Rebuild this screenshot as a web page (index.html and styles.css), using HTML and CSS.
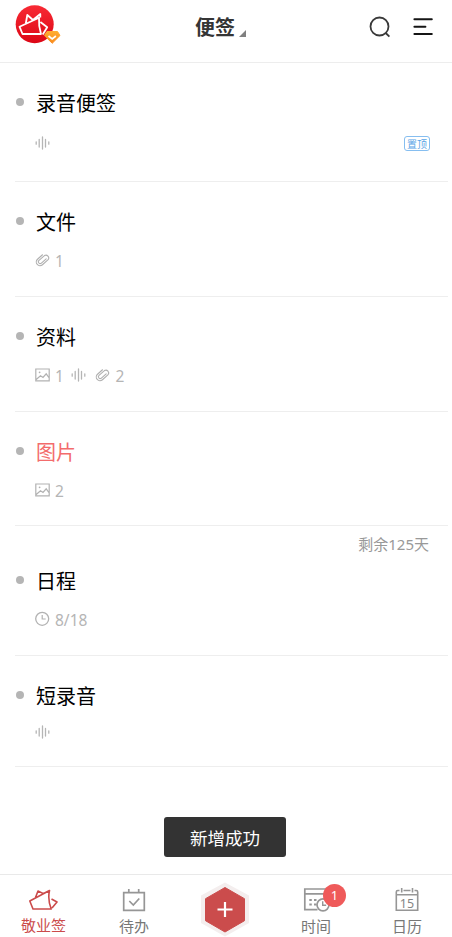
FILE: index.html
```html
<!DOCTYPE html>
<html lang="zh-CN">
<head>
<meta charset="utf-8">
<title>便签</title>
<link rel="stylesheet" href="styles.css">
</head>
<body>
<svg class="defs" width="0" height="0">
  <symbol id="wave" viewBox="0 0 16 16"><path d="M1.200 6.800v2.400M4.200 4.500v7.500M7.500 2v12M10.500 4.500v7.500M13.800 6.800v2.400" fill="none" stroke="#b5b5b5" stroke-width="1.300" stroke-linecap="round"/></symbol>
  <symbol id="clip" viewBox="0 0 16 16"><g transform="rotate(48 7.500 8)" fill="none" stroke="#b0b0b0" stroke-width="1.100" stroke-linecap="round"><path d="M3.600 4.500v6.700a3.700 3.700 0 0 0 7.400 0V3.600a2.800 2.800 0 0 0-5.500 0v7.300a1.800 1.800 0 0 0 3.600 0V4.500"/></g></symbol>
  <symbol id="pic" viewBox="0 0 16 16"><path d="M.8 2h13.400v11.800H.8zM1.200 12.500l4.300-3.700 2.500 1.600 3.200-3.600 3 4.200" fill="none" stroke="#b2b2b2" stroke-width="1.200"/><circle cx="4.600" cy="5.300" r=".9" fill="#b2b2b2"/></symbol>
  <symbol id="clock" viewBox="0 0 16 16"><circle cx="7.200" cy="7.800" r="6.500" fill="none" stroke="#b2b2b2" stroke-width="1.300"/><path d="M7.200 4v4h3.500" fill="none" stroke="#b2b2b2" stroke-width="1.200"/></symbol>
</svg>
<div class="app">
  <header class="header">
    <div class="avatar">
      <svg width="48" height="46" viewBox="0 0 48 46">
        <defs>
          <linearGradient id="red" x1="0" y1="0" x2="0" y2="1"><stop offset="0" stop-color="#f82a34"/><stop offset="1" stop-color="#dc0716"/></linearGradient>
          <linearGradient id="gold" x1="0" y1="0" x2="0" y2="1"><stop offset="0" stop-color="#ffad32"/><stop offset="1" stop-color="#f98a1c"/></linearGradient>
        </defs>
        <circle cx="19.700" cy="20.300" r="19" fill="url(#red)"/>
        <path d="M4.500 22.700 24 13.700q-.5 8 2 16.300H7.500zM10.800 19.500l1.500-8.500 5.700 5M18.500 15.500 25.300 10v3.500M25.400 18l6.800 5.200-4.500 7.300" fill="none" stroke="#fff" stroke-width="1.800" stroke-linejoin="round"/>
        <path d="M32 27.500h10.500l2.500 4-7.800 7.800-7.800-7.800z" fill="url(#gold)" stroke="url(#gold)" stroke-linejoin="round"/>
        <path d="m33.500 32 3.700 3 3.700-3" fill="none" stroke="#fff" stroke-width="1.700"/>
      </svg>
    </div>
    <h1 class="heading">便签<i class="corner"></i></h1>
    <div class="actions">
      <svg width="24" height="24" viewBox="0 0 24 24" fill="none" stroke="#393939" stroke-width="1.800"><circle cx="11.500" cy="11.500" r="9"/><path d="m17.700 18 3.700 3.700"/></svg>
      <svg width="20" height="20" viewBox="0 0 20 20" stroke="#151515" stroke-width="2" stroke-linecap="round"><path d="M1.400 2.300h17.400M1.400 9.800h11M1.400 17h17.400"/></svg>
    </div>
  </header>
  <ul class="notes">
    <li class="note first">
      <h2 class="title">录音便签</h2>
      <div class="meta"><svg class="icon"><use href="#wave"/></svg><span class="pin">置顶</span></div>
    </li>
    <li class="note">
      <h2 class="title">文件</h2>
      <div class="meta"><svg class="icon"><use href="#clip"/></svg><span class="num">1</span></div>
    </li>
    <li class="note">
      <h2 class="title">资料</h2>
      <div class="meta"><svg class="icon"><use href="#pic"/></svg><span class="num">1</span><svg class="icon"><use href="#wave"/></svg><svg class="icon after-wave"><use href="#clip"/></svg><span class="num">2</span></div>
    </li>
    <li class="note short">
      <h2 class="title red">图片</h2>
      <div class="meta"><svg class="icon"><use href="#pic"/></svg><span class="num">2</span></div>
    </li>
    <li class="note dated">
      <div class="remain">剩余125天</div>
      <h2 class="title">日程</h2>
      <div class="meta"><svg class="icon"><use href="#clock"/></svg><span class="num">8/18</span></div>
    </li>
    <li class="note last">
      <h2 class="title">短录音</h2>
      <div class="meta"><svg class="icon"><use href="#wave"/></svg></div>
    </li>
  </ul>
  <div class="toast">新增成功</div>
  <nav class="tabs">
    <a class="tab active">
      <svg width="30" height="26" viewBox="0 0 30 26" fill="none" stroke="#cb4b4b" stroke-width="1.600" stroke-linejoin="round"><path d="M.8 14 20.500 3.500q-2 9 1.700 18.500H4zM6.500 10.500 9 4l5.500 2.600M13 7.200 20.500 3.500M22.500 12l5.500 3-5 6"/></svg>
      <span>敬业签</span>
    </a>
    <a class="tab">
      <svg width="26" height="26" viewBox="0 0 26 26" fill="none" stroke="#969696" stroke-width="1.700"><path d="M2.700 5.700h20.600v17.600H2.700zM7.800 2v3.500M17.700 2v3.500M8.300 14l4 4 6-6.500"/></svg>
      <span>待办</span>
    </a>
    <a class="add">
      <svg width="50" height="56" viewBox="0 0 50 56"><path d="M25 1.500 49 14.500v27.500L25 55.500 1 42v-27.500z" fill="#f4eeee"/><path d="M25 6.500 44.500 17.700v22L25 51 5.500 39.700v-22z" fill="#cb4c4c" stroke="#cb4c4c" stroke-linejoin="round"/><path d="M17.500 28.500h15M25 21v15" stroke="#fff" stroke-width="2.200"/></svg>
    </a>
    <a class="tab">
      <svg width="28" height="26" viewBox="0 0 28 26" fill="none" stroke="#969696" stroke-width="1.700"><path d="M15.500 22.700H2.800V2h22.500v9.500M3 6.800h22"/><path d="M7.300 13h2.500M12 13h2.500M7.300 17.500h2.500M12 17.500h2.500" stroke-width="2.200"/><circle cx="21" cy="17.800" r="6" fill="#fff"/><path d="M20.700 14.300v4h3.500" stroke-width="1.400"/></svg>
      <span>时间</span>
      <b class="badge">1</b>
    </a>
    <a class="tab">
      <svg width="26" height="26" viewBox="0 0 26 26" fill="none" stroke="#969696" stroke-width="1.600"><path d="M5.500 3.500H3.800q-1.500 0-1.500 1.500v18.300h21.400V5q0-1.500-1.500-1.500h-1.700M2.500 7.800h21M9.500 3.500h7M7.700 1v4.500M18.500 1v4.500"/><text x="13" y="20.500" text-anchor="middle" class="day">15</text></svg>
      <span>日历</span>
    </a>
  </nav>
</div>
</body>
</html>
```
FILE: styles.css
```css
* { box-sizing: border-box; }
body { margin: 0; background: #fff; font-family: "Noto Sans CJK SC", sans-serif; }
.defs { display: none; }
.app { height: 937px; display: flex; flex-direction: column; overflow: hidden; }
.header { flex: none; height: 63px; border-bottom: 1px solid #ededed; display: grid; grid-template-columns: 1fr auto 1fr; padding: 4px 19px 0 15px; }
.avatar svg { display: block; }
.heading { align-self: start; margin: 9px 7px 0 0; font-size: 20px; line-height: 28px; font-weight: 700; color: #353535; display: flex; align-items: flex-end; gap: 4px; }
.corner { width: 7px; height: 7px; margin-bottom: 4px; background: #808080; clip-path: polygon(100% 0, 100% 100%, 0 100%); }
.actions { display: flex; justify-content: flex-end; gap: 21px; padding-top: 11px; }
.actions svg + svg { margin-top: 2px; }
.notes { list-style: none; margin: 0; padding: 0 4px 0 15px; }
.note { height: 115px; padding-top: 26px; border-bottom: 1px solid #eee; }
.first { height: 119px; }
.short { height: 114px; }
.dated { height: 130px; padding-top: 6px; }
.last { height: 111px; }
.title { margin: 0 0 14px; height: 28px; line-height: 28px; font-size: 20px; font-weight: 400; color: #000; display: flex; align-items: center; }
.title::before { content: ""; width: 8px; height: 8px; border-radius: 50%; background: #b5b5b5; margin: -2px 12.500px 0 .5px; }
.red { color: #f36c6c; }
.first .title { margin-bottom: 16px; }
.last .title { margin-bottom: 12px; }
.meta { display: flex; align-items: center; height: 20px; padding-left: 20px; color: #b5b5b5; font-size: 15.500px; line-height: 20px; }
.icon { width: 16px; height: 16px; flex: none; }
.num { font-family: "Noto Sans", sans-serif; margin: 1px 7.500px 0 4px; }
.after-wave { margin-left: 8px; }
.pin { margin: 0 18px 0 auto; width: 26px; height: 15px; border: 1px solid #86bef0; border-radius: 3px; font-size: 10px; line-height: 13px; text-align: center; color: #5aa5e6; }
.remain { height: 24px; margin: 0 19px 11px 0; text-align: right; font-family: "Noto Sans", "Noto Sans CJK SC", sans-serif; font-size: 15px; line-height: 24px; color: #999; }
.toast { align-self: center; width: 122px; height: 40px; margin: 50px 2px 0 0; border-radius: 3px; background: #333; color: #fff; font-size: 17.500px; line-height: 41px; text-align: center; }
.tabs { margin-top: auto; height: 63px; border-top: 1px solid #e9e9e9; display: grid; grid-template-columns: 87px 94px 88px 94px 88px; }
.tab { position: relative; display: flex; flex-direction: column; align-items: center; padding-top: 12px; font-size: 15px; line-height: 22px; color: #777; }
.tab span { margin-top: 2px; }
.active { color: #cb4b4b; }
.active span { margin-top: 1px; }
.add { display: flex; justify-content: center; padding-top: 6px; }
.badge { position: absolute; left: 54px; top: 9px; width: 23px; height: 23px; border-radius: 50%; background: #ef5a5a; color: #fff; font-family: "Noto Sans", sans-serif; font-size: 13px; font-weight: 400; line-height: 23px; text-align: center; }
.day { font-family: "Noto Sans", sans-serif; font-size: 12.500px; fill: #858585; stroke: none; }
```
